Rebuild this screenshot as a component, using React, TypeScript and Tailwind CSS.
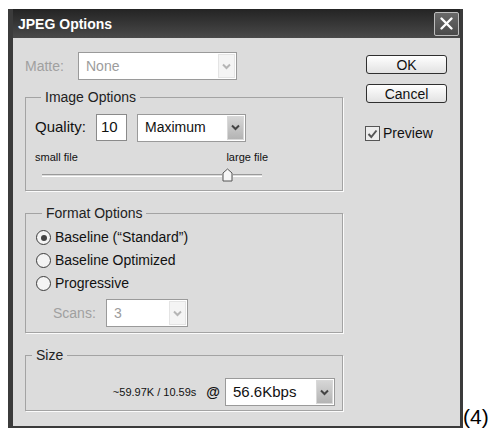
import React from "react";

const font = "font-['Liberation_Sans',Arial,sans-serif]";

function Chevron({ disabled }: { disabled?: boolean }) {
  return (
    <svg width="9" height="7" viewBox="0 0 9 7">
      <path
        d="M1 1.5 L4.5 5 L8 1.5"
        fill="none"
        stroke={disabled ? "#b5b5b5" : "#444"}
        strokeWidth="2"
      />
    </svg>
  );
}

function Select({
  value,
  w,
  disabled,
  text = "text-[14px]",
}: {
  value: string;
  w: string;
  disabled?: boolean;
  text?: string;
}) {
  return (
    <div
      className={`${w} h-[28px] flex items-stretch bg-white border border-[#9a9a9a] p-[1px]`}
    >
      <div
        className={`flex-1 flex items-center pl-[6px] ${text} ${disabled ? "text-[#9c9c9c]" : "text-[#111]"}`}
      >
        {value}
      </div>
      <div
        className={`w-[17px] flex items-center justify-center border ${
          disabled
            ? "border-[#e4e4e4] bg-[#f4f4f4]"
            : "border-[#d8d8d8] bg-gradient-to-b from-[#d6d6d6] to-[#b4b4b4]"
        }`}
      >
        <Chevron disabled={disabled} />
      </div>
    </div>
  );
}

function Radio({ checked, label }: { checked?: boolean; label: string }) {
  return (
    <div className="h-[23px] flex items-center gap-[4px]">
      <span className="w-[15px] h-[15px] rounded-full border border-[#3c3c3c] bg-[#f4f4f4] flex items-center justify-center">
        {checked && <span className="w-[6px] h-[6px] rounded-full bg-[#444]" />}
      </span>
      <span className="text-[14px] text-[#111]">{label}</span>
    </div>
  );
}

function Group({
  title,
  children,
  className = "",
}: {
  title: string;
  children: React.ReactNode;
  className?: string;
}) {
  return (
    <fieldset
      className={`border border-[#a3a3a3] shadow-[1px_1px_0_#fbfbfb] ${className}`}
    >
      <legend className="ml-[6px] px-[4px] text-[14px] leading-[16px] text-[#222]">
        {title}
      </legend>
      {children}
    </fieldset>
  );
}

function Button({ label }: { label: string }) {
  return (
    <div className="h-[19px] w-[81px] rounded-[3px] border border-[#2f2f2f] bg-gradient-to-b from-[#ffffff] to-[#e2e2e2] flex items-center justify-center text-[14px] leading-none text-[#111]">
      {label}
    </div>
  );
}

export default function App() {
  return (
    <div
      className={`w-[495px] h-[432px] bg-white flex items-end pl-[8px] pt-[9px] pb-[4px] ${font}`}
    >
      <div className="w-[455px] h-[419px] flex flex-col border-l-[5px] border-r-[3px] border-b-[2px] border-[#3b3b3b]">
        {/* title bar */}
        <div className="h-[29px] flex items-center justify-between pl-[5px] pr-[1px] bg-gradient-to-b from-[#242424] to-[#4a4a4a]">
          <span className="text-white font-bold text-[14px] leading-none">
            JPEG Options
          </span>
          <div className="w-[25px] h-[24px] rounded-[2px] border border-[#bdbdbd] bg-gradient-to-b from-[#6a6a6a] to-[#4a4a4a] flex items-center justify-center">
            <svg width="15" height="15" viewBox="0 0 15 15">
              <path
                d="M2.5 2.5 L12.5 12.5 M12.5 2.5 L2.5 12.5"
                stroke="#fff"
                strokeWidth="2.4"
                strokeLinecap="round"
              />
            </svg>
          </div>
        </div>

        {/* body */}
        <div className="flex-1 bg-[#dcdcdc] flex gap-[23px] pl-[12px]">
          <div className="w-[318px] flex flex-col pt-[14px]">
            <div className="h-[28px] flex items-center">
              <span className="w-[53px] text-[14px] text-[#a0a0a0]">Matte:</span>
              <Select value="None" w="w-[159px]" disabled />
            </div>

            <Group title="Image Options" className="mt-[9px] h-[102px] pl-[9px] pt-[9px]">
              <div className="h-[27px] flex items-center">
                <span className="w-[61px] text-[15px] text-[#111]">Quality:</span>
                <div className="w-[31px] h-[27px] bg-white border border-[#8a8a8a] flex items-center pl-[4px] text-[15px] text-[#111]">
                  10
                </div>
                <div className="ml-[10px]">
                  <Select value="Maximum" w="w-[109px]" />
                </div>
              </div>
              <div className="mt-[10px] w-[233px] flex justify-between text-[11px] leading-[12px] text-[#111]">
                <span>small file</span>
                <span>large file</span>
              </div>
              <div className="mt-[4px] ml-[7px] w-[220px] h-[16px] flex items-center">
                <div className="w-[180px] h-[3px] border-t border-[#9a9a9a] border-b border-b-white" />
                <svg width="11" height="14" viewBox="0 0 11 14" className="shrink-0">
                  <path
                    d="M1 5 L5.5 1 L10 5 L10 13 L1 13 Z"
                    fill="#f6f6f6"
                    stroke="#555"
                    strokeWidth="1"
                  />
                </svg>
                <div className="w-[29px] h-[3px] border-t border-[#9a9a9a] border-b border-b-white" />
              </div>
            </Group>

            <Group title="Format Options" className="mt-[14px] h-[128px] pl-[10px] pt-[5px]">
              <Radio checked label={"Baseline (\u201cStandard\u201d)"} />
              <Radio label="Baseline Optimized" />
              <Radio label="Progressive" />
              <div className="mt-[4px] h-[28px] flex items-center pl-[17px]">
                <span className="w-[53px] text-[14px] text-[#a0a0a0]">Scans:</span>
                <Select value="3" w="w-[82px]" disabled />
              </div>
            </Group>

            <Group title="Size" className="mt-[14px] h-[64px] pt-[15px] pr-[7px]">
              <div className="h-[28px] flex items-center justify-end">
                <span className="text-[11px] text-[#111]">~59.97K / 10.59s</span>
                <span className="ml-[10px] mr-[5px] text-[14px] font-bold text-[#111]">@</span>
                <Select value="56.6Kbps" w="w-[110px]" text="text-[15px]" />
              </div>
            </Group>
          </div>

          <div className="w-[81px] flex flex-col pt-[17px]">
            <Button label="OK" />
            <div className="mt-[10px]">
              <Button label="Cancel" />
            </div>
            <div className="mt-[20px] -ml-[1px] flex items-center gap-[3px]">
              <span className="w-[15px] h-[15px] border border-[#555] bg-[#ececec] flex items-center justify-center">
                <svg width="11" height="10" viewBox="0 0 11 10">
                  <path
                    d="M1.5 5 L4.3 8 L9.5 1.5"
                    fill="none"
                    stroke="#555"
                    strokeWidth="2"
                  />
                </svg>
              </span>
              <span className="text-[14px] text-[#111]">Preview</span>
            </div>
          </div>
        </div>
      </div>
      <span className="text-[21px] leading-none text-black mb-[1px]">(4)</span>
    </div>
  );
}
